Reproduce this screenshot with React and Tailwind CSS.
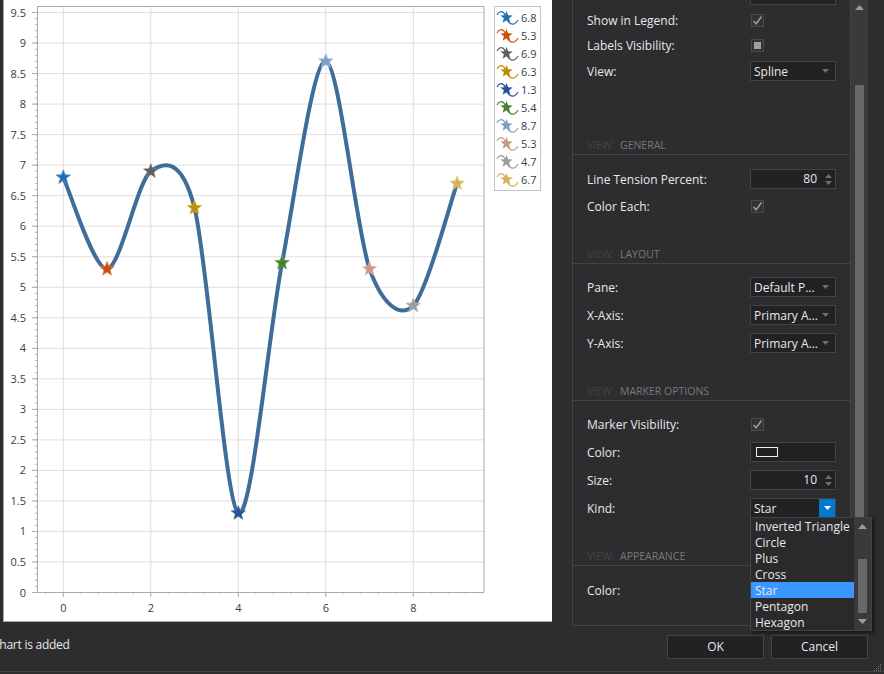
import React from 'react';

const values = [6.8, 5.3, 6.9, 6.3, 1.3, 5.4, 8.7, 5.3, 4.7, 6.7];
const colors = ['#1f6db3', '#c9500f', '#5e5e5e', '#bd8f00', '#24509a', '#47802c', '#7d9fc4', '#c99b80', '#9c9c9c', '#d3b35a'];
const borders = ['#4f93cf', '#dd7d45', '#7d7d7d', '#dcb23a', '#4b73b5', '#6d9f50', '#a5bdd8', '#dfbca7', '#b8b8b8', '#e6cc85'];

// svg starts at x=4 of the page
const X = (v) => 59.3 + v * 43.75;
const Y = (v) => 592.5 - v * 61.05;

const splinePath = () => {
    const pts = values.map((v, i) => [X(i), Y(v)]);
    const k = 0.15;
    const tangent = (i) => {
        const a = pts[Math.max(i - 1, 0)];
        const b = pts[Math.min(i + 1, pts.length - 1)];
        return [(b[0] - a[0]) * k, (b[1] - a[1]) * k];
    };
    let d = `M${pts[0][0]} ${pts[0][1]}`;
    for (let i = 0; i < pts.length - 1; i++) {
        const m0 = tangent(i);
        const m1 = tangent(i + 1);
        d += ` C${pts[i][0] + m0[0]} ${pts[i][1] + m0[1]} ${pts[i + 1][0] - m1[0]} ${pts[i + 1][1] - m1[1]} ${pts[i + 1][0]} ${pts[i + 1][1]}`;
    }
    return d;
};

const starPoints = (cx, cy, r) => {
    const out = [];
    for (let i = 0; i < 10; i++) {
        const rad = i % 2 === 0 ? r : r * 0.42;
        const a = -Math.PI / 2 + (i * Math.PI) / 5;
        out.push(`${cx + rad * Math.cos(a)},${cy + rad * Math.sin(a)}`);
    }
    return out.join(' ');
};

const Chart = () => {
    const yTicks = Array.from({ length: 20 }, (_, i) => i * 0.5);
    const yMinor = Array.from({ length: 96 }, (_, i) => i * 0.1);
    const xMinor = Array.from({ length: 25 }, (_, i) => -0.4 + i * 0.4);
    return (
        <svg width="548" height="621" className="block" style={{ fontFamily: '"Open Sans", sans-serif' }}>
            {yTicks.map((t) => (
                <g key={t}>
                    <line x1="33" x2="480" y1={Y(t)} y2={Y(t)} stroke="#dfdfdf" />
                    <line x1="28" x2="33" y1={Y(t)} y2={Y(t)} stroke="#a8a8a8" />
                    <text x="22" y={Y(t) + 4} textAnchor="end" fontSize="11" fill="#3b3b4a">{t}</text>
                </g>
            ))}
            {yMinor.map((t) => (
                <line key={t} x1="31" x2="33" y1={Y(t)} y2={Y(t)} stroke="#b5b5b5" />
            ))}
            {[0, 2, 4, 6, 8].map((t) => (
                <g key={t}>
                    <line x1={X(t)} x2={X(t)} y1="6" y2="592" stroke="#dfdfdf" />
                    <line x1={X(t)} x2={X(t)} y1="592" y2="597" stroke="#a8a8a8" />
                    <text x={X(t)} y="612" textAnchor="middle" fontSize="11" fill="#3b3b4a">{t}</text>
                </g>
            ))}
            {xMinor.map((t) => (
                <line key={t} x1={X(t)} x2={X(t)} y1="592" y2="594" stroke="#b5b5b5" />
            ))}
            <path d="M33.5 592.5 V6.5 H480 V592.5 Z" fill="none" stroke="#a8a8a8" />
            <path d={splinePath()} fill="none" stroke="#3f6d9a" strokeWidth="4" />
            {values.map((v, i) => (
                <polygon key={i} points={starPoints(X(i), Y(v), 7.5)} fill={colors[i]} stroke={borders[i]} strokeWidth="0.8" />
            ))}
        </svg>
    );
};

const Legend = () => (
    <div className="absolute left-[490px] top-[6px] w-[47px] h-[185px] bg-white border border-[#c4c4c4] flex flex-col py-[1px] pl-[1px]">
        {values.map((v, i) => (
            <div key={i} className="h-[18px] flex items-center gap-[2px]">
                <svg width="23" height="18" className="shrink-0">
                    <path d="M1 7 C3 3 7 2 9 7 C11 13 14 17 18 16 C20 15.5 21 14 22 12" fill="none" stroke={colors[i]} strokeWidth="1.1" />
                    <polygon points={starPoints(10.5, 9.5, 6.5)} fill={colors[i]} />
                </svg>
                <span className="text-[11px] leading-none text-[#3b3b4a]">{v}</span>
            </div>
        ))}
    </div>
);

const Check = ({ on, square }) => (
    <div className="ml-[1px] w-[13px] h-[13px] border border-[#4a4a4d] bg-[#333336] flex items-center justify-center">
        {on && (
            <svg width="11" height="11" viewBox="0 0 11 11">
                <path d="M1.5 6 L4.2 8.8 L9.5 1.5" fill="none" stroke="#9a9a9a" strokeWidth="1.6" />
            </svg>
        )}
        {square && <div className="w-[7px] h-[7px] bg-[#a0a0a0]" />}
    </div>
);

const Caret = ({ color = '#6f6f72' }) => (
    <svg width="7" height="4" viewBox="0 0 7 4" className="shrink-0">
        <path d="M0 0 H7 L3.5 4 Z" fill={color} />
    </svg>
);

const CaretUp = () => (
    <svg width="7" height="4" viewBox="0 0 7 4" className="shrink-0">
        <path d="M0 4 H7 L3.5 0 Z" fill="#6f6f72" />
    </svg>
);

const Combo = ({ value }) => (
    <div className="w-[86px] h-[20px] bg-[#222224] border border-[#434346] flex items-center justify-between pl-[3px] pr-[6px]">
        <span className="mt-[2px]">{value}</span>
        <Caret />
    </div>
);

const Spin = ({ value }) => (
    <div className="w-[86px] h-[20px] bg-[#222224] border border-[#434346] flex items-center justify-end pr-[3px] gap-[8px]">
        <span>{value}</span>
        <div className="flex flex-col gap-[3px]">
            <CaretUp />
            <Caret />
        </div>
    </div>
);

const Row = ({ label, h = 'h-[28px]', children }) => (
    <div className={`${h} flex items-center pl-[14px]`}>
        <span className="w-[163px] shrink-0 mt-[2px]">{label}</span>
        {children}
    </div>
);

const Section = ({ name }) => (
    <div className="h-[19px] pl-[14px] border-b border-[#434346] text-[10.5px] leading-[18px]">
        <span className="inline-block w-[33px] text-[#434346]">VIEW:</span>
        <span className="text-[#78787a]">{name}</span>
    </div>
);

const kinds = ['Inverted Triangle', 'Circle', 'Plus', 'Cross', 'Star', 'Pentagon', 'Hexagon'];

const KindPopup = () => (
    <div className="absolute left-[178px] top-[517px] w-[122px] h-[114px] bg-[#2a2a2c] border border-[#434346] shadow-[2px_2px_3px_rgba(0,0,0,0.5)] flex">
        <div className="w-[103px]">
            {kinds.map((k) => (
                <div key={k} className={`h-[16px] leading-[18px] pl-[4px] whitespace-nowrap ${k === 'Star' ? 'bg-[#3a97ff]' : ''}`}>{k}</div>
            ))}
        </div>
        <div className="flex-1 bg-[#3a3a3d] flex flex-col items-center justify-between py-[6px]">
            <svg width="9" height="5"><path d="M0 5 H9 L4.5 0 Z" fill="#9a9a9a" /></svg>
            <div className="absolute top-[41px] right-[4px] w-[9px] h-[54px] bg-[#68686a]" />
            <svg width="9" height="5"><path d="M0 0 H9 L4.5 5 Z" fill="#9a9a9a" /></svg>
        </div>
    </div>
);

const PropertyGrid = () => (
    <div className="relative w-[296px] h-[626px] shrink-0 text-[12px] text-[#e8e8e8]">
        <div className="h-[626px] w-[279px] border-l border-r border-b border-[#434346] overflow-hidden">
            <div className="ml-[177px] w-[86px] h-[5px] bg-[#222224] border-b border-x border-[#434346]" />
            <Row label="Show in Legend:" h="h-[30px]"><Check on /></Row>
            <Row label="Labels Visibility:" h="h-[20px]"><Check square /></Row>
            <Row label="View:" h="h-[31px]"><Combo value="Spline" /></Row>
            <div className="h-[50px]" />
            <Section name="GENERAL" />
            <div className="h-[10px]" />
            <Row label="Line Tension Percent:"><Spin value="80" /></Row>
            <Row label="Color Each:" h="h-[26px]"><Check on /></Row>
            <div className="h-[26px]" />
            <Section name="LAYOUT" />
            <div className="h-[9px]" />
            <Row label="Pane:"><Combo value="Default P..." /></Row>
            <Row label="X-Axis:"><Combo value="Primary A..." /></Row>
            <Row label="Y-Axis:"><Combo value="Primary A..." /></Row>
            <div className="h-[25px]" />
            <Section name="MARKER OPTIONS" />
            <div className="h-[9px]" />
            <Row label="Marker Visibility:"><Check on /></Row>
            <Row label="Color:">
                <div className="w-[86px] h-[20px] bg-[#222224] border border-[#434346] flex items-center pl-[5px]">
                    <div className="w-[22px] h-[10px] border border-[#f0f0f0]" />
                </div>
            </Row>
            <Row label="Size:"><Spin value="10" /></Row>
            <Row label="Kind:">
                <div className="w-[86px] h-[20px] bg-[#222224] border border-[#434346] flex items-center justify-between pl-[3px]">
                    <span className="mt-[2px]">Star</span>
                    <div className="w-[16px] h-full bg-[#007acc] flex items-center justify-center"><Caret color="#ffffff" /></div>
                </div>
            </Row>
            <div className="h-[25px]" />
            <Section name="APPEARANCE" />
            <div className="h-[10px]" />
            <Row label="Color:" />
        </div>
        <div className="absolute left-[279px] top-0 w-[17px] h-[626px] bg-[#3a3a3d] flex flex-col items-center pt-[5px]">
            <svg width="9" height="5"><path d="M0 5 H9 L4.5 0 Z" fill="#9a9a9a" /></svg>
            <div className="mt-[75px] w-[9px] h-[432px] bg-[#68686a]" />
        </div>
        <KindPopup />
    </div>
);

const Grip = () => (
    <svg width="9" height="9" className="absolute right-[2px] bottom-[2px]">
        {[[7, 1], [5, 3], [7, 3], [3, 5], [5, 5], [7, 5], [1, 7], [3, 7], [5, 7], [7, 7]].map(([x, y]) => (
            <rect key={`${x}-${y}`} x={x} y={y} width="1" height="1" fill="#77777a" />
        ))}
    </svg>
);

export default function App() {
    return (
        <div className="relative w-[884px] h-[674px] overflow-hidden bg-[#2d2d30] text-[12px] text-[#e8e8e8]" style={{ fontFamily: '"Open Sans", sans-serif' }}>
            <div className="flex h-[626px]">
                <div className="relative ml-[3px] w-[549px] h-[622px] bg-white border-l border-b border-[#a8a8a8]">
                    <Chart />
                    <Legend />
                </div>
                <div className="ml-[20px]">
                    <PropertyGrid />
                </div>
            </div>
            <div className="flex items-start h-[46px] border-b border-[#434346]">
                <span className="-ml-[8px] mt-[10px] whitespace-nowrap tracking-[-0.25px]">Chart is added</span>
                <div className="ml-auto mr-[16px] mt-[9px] flex gap-[7px]">
                    <button className="w-[97px] h-[24px] bg-[#222224] border border-[#434346]">OK</button>
                    <button className="w-[97px] h-[24px] bg-[#222224] border border-[#434346]">Cancel</button>
                </div>
            </div>
            <Grip />
        </div>
    );
}
